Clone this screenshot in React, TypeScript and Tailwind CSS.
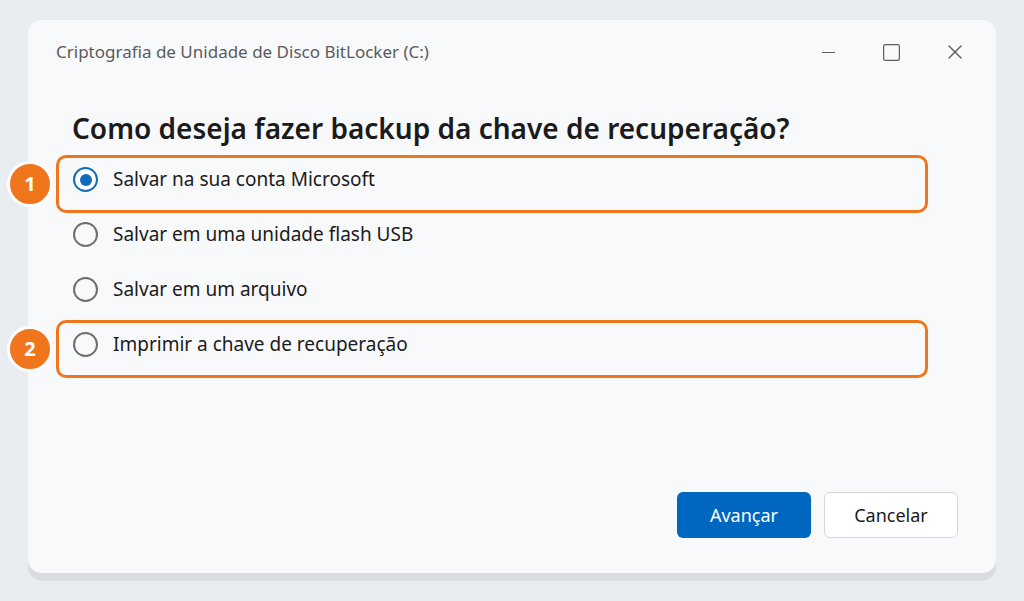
import { Minus, Square, X } from 'lucide-react';

const OPTIONS = [
  { label: 'Salvar na sua conta Microsoft', checked: true, badge: 1 },
  { label: 'Salvar em uma unidade flash USB', checked: false },
  { label: 'Salvar em um arquivo', checked: false },
  { label: 'Imprimir a chave de recuperação', checked: false, badge: 2 },
];

function Radio({ checked }: { checked: boolean }) {
  if (checked) {
    return (
      <span className="flex h-[25px] w-[25px] shrink-0 items-center justify-center rounded-full border-[2px] border-[#0f6cbd] bg-white">
        <span className="h-[12px] w-[12px] rounded-full bg-[#0f6cbd]" />
      </span>
    );
  }
  return <span className="h-[25px] w-[25px] shrink-0 rounded-full border-[2px] border-[#6e6e6e] bg-transparent" />;
}

export default function App() {
  return (
    <div
      className="flex h-[601px] w-[1024px] items-start bg-[#e9ecf0] pl-[28px] pt-[20px]"
      style={{ fontFamily: '"Noto Sans", "Open Sans", sans-serif' }}
    >
      <div className="flex h-[553px] w-[968px] flex-col rounded-[14px] bg-[#f8f9fb] shadow-[0_8px_0_#d9dce0]">
        {/* title bar */}
        <div className="flex h-[64px] items-center pl-[28px] pr-[10px]">
          <span className="flex-1 text-[17px] text-[#5b5b5b]">Criptografia de Unidade de Disco BitLocker (C:)</span>
          <div className="flex text-[#5f5f5f]">
            <span className="flex h-[40px] w-[63px] items-center justify-center">
              <Minus className="h-[21px] w-[21px]" strokeWidth={1.4} />
            </span>
            <span className="flex h-[40px] w-[63px] items-center justify-center">
              <Square className="h-[21px] w-[21px]" strokeWidth={1.4} absoluteStrokeWidth />
            </span>
            <span className="flex h-[40px] w-[63px] items-center justify-center">
              <X className="h-[24px] w-[24px]" strokeWidth={1.4} />
            </span>
          </div>
        </div>

        <div className="pl-[44px] pt-[26px]">
          <h1 className="text-[28px] font-semibold leading-[36px] text-[#1b1b1b]">
            Como deseja fazer backup da chave de recuperação?
          </h1>

          <div className="mt-[6px] flex flex-col">
            {OPTIONS.map(opt => (
              <div key={opt.label} className="relative flex h-[55px] items-center gap-[15px] pl-[1px]">
                <Radio checked={opt.checked} />
                <span className="text-[19px] text-[#1b1b1b]">{opt.label}</span>
                {opt.badge && (
                  <div className="absolute left-[-16px] top-[3px] h-[58px] w-[872px] rounded-[10px] border-[3px] border-[#f0761a]">
                    <div className="absolute left-[-52px] top-[3px] flex h-[46px] w-[46px] items-center justify-center rounded-full border-[3px] border-white bg-[#ef761c] text-[20px] font-bold text-white">
                      {opt.badge}
                    </div>
                  </div>
                )}
              </div>
            ))}
          </div>
        </div>

        <div className="mt-auto flex justify-end gap-[13px] pb-[35px] pr-[38px]">
          <button className="h-[46px] w-[134px] rounded-[6px] bg-[#0067c0] text-[18px] text-white">Avançar</button>
          <button className="h-[46px] w-[134px] rounded-[6px] border border-[#d6d6d6] bg-white text-[18px] text-[#1b1b1b]">
            Cancelar
          </button>
        </div>
      </div>
    </div>
  );
}
